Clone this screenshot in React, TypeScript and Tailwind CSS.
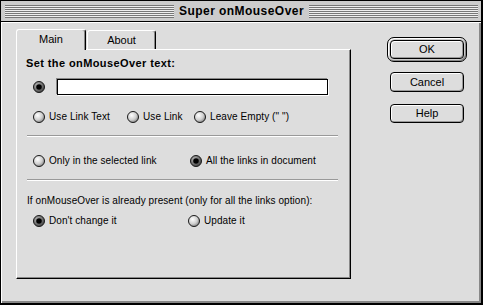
import React from "react";

const font = { fontFamily: '"Liberation Sans", Arial, sans-serif' };

function Radio({ on }: { on?: boolean }) {
  return (
    <svg width="12" height="12" viewBox="0 0 12 12" className="shrink-0">
      <defs>
        <radialGradient id="rg-off" cx="38%" cy="35%" r="75%">
          <stop offset="0" stopColor="#ffffff" />
          <stop offset="0.55" stopColor="#cfcfcf" />
          <stop offset="1" stopColor="#707070" />
        </radialGradient>
        <radialGradient id="rg-on" cx="38%" cy="35%" r="75%">
          <stop offset="0" stopColor="#bbbbbb" />
          <stop offset="1" stopColor="#333333" />
        </radialGradient>
      </defs>
      <circle cx="6" cy="6" r="5.5" fill={on ? "url(#rg-on)" : "url(#rg-off)"} stroke="#1a1a1a" strokeWidth="1" />
      {on && <circle cx="6" cy="6" r="2.8" fill="#000" />}
    </svg>
  );
}

function Opt({ on, label, w }: { on?: boolean; label: string; w?: string }) {
  return (
    <div className={`flex items-center gap-[4px] ${w ?? ""}`}>
      <Radio on={on} />
      <span className="text-[10px] leading-[14px] tracking-[0.08px] text-black">{label}</span>
    </div>
  );
}

function Btn({ label, h }: { label: string; h: string }) {
  return (
    <div
      className={`w-[74px] ${h} rounded-[4px] border border-black bg-[#dddddd] shadow-[inset_1px_1px_0_#ffffff,inset_-1px_-1px_0_#999999] flex items-center justify-center text-[11px] text-black`}
    >
      {label}
    </div>
  );
}

export default function App() {
  return (
    <div className="w-[483px] h-[305px] bg-black" style={font}>
      <div className="w-[483px] h-[305px] flex flex-col border-l border-t border-black border-r-2 border-b-2">
        {/* Title bar */}
        <div className="h-[20px] bg-[#cccccc] flex items-center pl-[4px] pr-[3px]">
          <div className="flex-1 h-[13px] bg-[repeating-linear-gradient(to_bottom,#777777_0px,#777777_1px,#eeeeee_1px,#eeeeee_2px)]" />
          <div className="px-[5px] text-[12px] font-bold leading-[14px] text-black tracking-[0.45px]">Super onMouseOver</div>
          <div className="flex-1 h-[13px] bg-[repeating-linear-gradient(to_bottom,#777777_0px,#777777_1px,#eeeeee_1px,#eeeeee_2px)]" />
        </div>
        <div className="h-[1px] bg-black" />
        {/* Content */}
        <div className="flex-1 flex bg-[#dddddd] shadow-[inset_1px_1px_0_#ffffff,inset_-2px_-2px_0_#888888] pl-[15px] pt-[7px]">
          {/* Left: tabs + panel */}
          <div className="w-[335px] flex flex-col">
            <div className="flex items-end h-[20px]">
              <div className="relative z-10 -mb-px w-[70px] h-[21px] bg-[#dddddd] border-l border-t border-white border-r border-r-black rounded-tl-[3px] rounded-tr-[3px] shadow-[inset_-1px_0_0_#888888] flex items-center justify-center text-[11px] text-black pb-[1px]">
                Main
              </div>
              <div className="ml-[1px] w-[69px] h-[19px] bg-[#dddddd] border-l border-t border-white border-r border-r-black rounded-tl-[3px] rounded-tr-[3px] shadow-[inset_-1px_0_0_#888888] flex items-center justify-center text-[11px] text-black">
                About
              </div>
            </div>
            <div className="h-[230px] border-t border-l border-white border-r border-r-black border-b border-b-black shadow-[inset_-1px_-1px_0_#888888] flex flex-col pl-[10px]">
              <div className="mt-[6px] h-[14px] -ml-[1px] text-[11px] font-bold leading-[14px] tracking-[0.4px] text-black">
                Set the onMouseOver text:
              </div>
              <div className="mt-[8px] h-[18px] flex items-center pl-[6px]">
                <Radio on />
                <div className="ml-[12px] w-[271px] h-[16px] bg-white border border-black shadow-[-1px_-1px_0_#888888,1px_1px_0_#ffffff]" />
              </div>
              <div className="mt-[14px] h-[14px] flex items-center pl-[6px]">
                <Opt label="Use Link Text" w="w-[94px]" />
                <Opt label="Use Link" w="w-[67px]" />
                <Opt label={'Leave Empty (" ")'} />
              </div>
              <div className="mt-[11px] mr-[12px] h-[2px] border-t border-[#999999] border-b border-b-white" />
              <div className="mt-[17px] h-[14px] flex items-center pl-[6px]">
                <Opt label="Only in the selected link" w="w-[157px]" />
                <Opt on label="All the links in document" />
              </div>
              <div className="mt-[11px] mr-[12px] h-[2px] border-t border-[#999999] border-b border-b-white" />
              <div className="mt-[13px] h-[14px] text-[10px] leading-[14px] tracking-[0.08px] text-black">
                If onMouseOver is already present (only for all the links option):
              </div>
              <div className="mt-[6px] h-[14px] flex items-center pl-[6px]">
                <Opt on label="Don't change it" w="w-[155px]" />
                <Opt label="Update it" />
              </div>
            </div>
          </div>
          {/* Right: buttons */}
          <div className="ml-[36px] pt-[8px] flex flex-col">
            <div className="w-[80px] h-[25px] rounded-[7px] border border-black bg-[#cccccc] shadow-[inset_1px_1px_0_#ffffff,inset_-1px_-1px_0_#888888] p-[2px]">
              <Btn label="OK" h="h-[19px]" />
            </div>
            <div className="mt-[10px] ml-[3px]">
              <Btn label="Cancel" h="h-[20px]" />
            </div>
            <div className="mt-[12px] ml-[3px]">
              <Btn label="Help" h="h-[19px]" />
            </div>
          </div>
        </div>
      </div>
    </div>
  );
}
